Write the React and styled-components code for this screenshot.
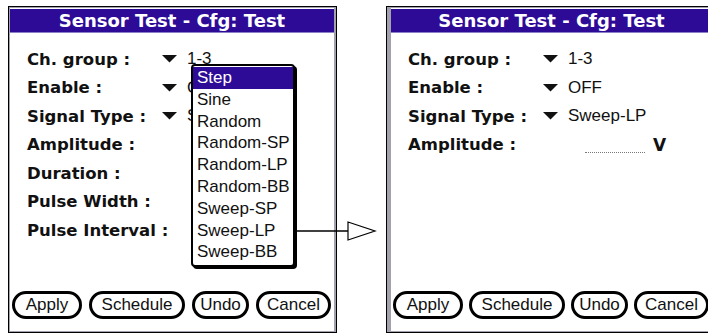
import React from 'react';
import styled, { createGlobalStyle } from 'styled-components';

const PURPLE = '#2e0b96';

const GlobalStyle = createGlobalStyle`
  html, body {
    margin: 0;
    padding: 0;
    background: #fff;
    overflow: hidden;
  }
`;

const Stage = styled.div`
  position: relative;
  width: 708px;
  height: 335px;
  box-sizing: border-box;
  padding: 6px 0 0 8px;
  display: flex;
  align-items: flex-start;
  overflow: hidden;
`;

const Screen = styled.div`
  position: relative;
  flex-shrink: 0;
  width: 329px;
  height: 327px;
  box-sizing: border-box;
  border: 1px solid #000;
  background: #a2a2ae;
  padding: 1px 2px 1px ${props => props.$gutter}px;
  display: flex;
`;

const Gutter = styled.div`
  flex-shrink: 0;
  width: 49px;
`;

const Display = styled.div`
  flex: 1;
  background: #fff;
  display: flex;
  flex-direction: column;
  border-top: 1px solid #fff;
`;

const TitleBar = styled.div`
  height: 24px;
  box-sizing: border-box;
  background: ${PURPLE};
  border-bottom: 1px solid #8a80c6;
  color: #fff;
  font-family: "DejaVu Sans", sans-serif;
  font-weight: bold;
  font-size: 18px;
  line-height: 23px;
  text-align: center;
  white-space: nowrap;
`;

const Form = styled.div`
  padding: 12px 0 0 17px;
  display: flex;
  flex-direction: column;
`;

const Row = styled.div`
  height: 28.5px;
  display: flex;
  align-items: center;
`;

const Label = styled.div`
  width: 135px;
  flex-shrink: 0;
  font-family: "DejaVu Sans", sans-serif;
  font-weight: bold;
  font-size: 16.5px;
  color: #111;
  white-space: nowrap;
`;

const Trigger = styled.div`
  display: flex;
  align-items: center;
  gap: 10px;
`;

const Value = styled.span`
  font-family: "Liberation Sans", sans-serif;
  font-size: 17px;
  color: #111;
  white-space: nowrap;
`;

const Field = styled.div`
  display: flex;
  align-items: center;
  padding-left: 42px;
  gap: 8px;
`;

const Dotted = styled.div`
  width: 60px;
  height: 16px;
  border-bottom: 1px dotted #777;
`;

const Unit = styled.span`
  font-family: "DejaVu Sans", sans-serif;
  font-weight: bold;
  font-size: 17px;
  color: #111;
`;

const ButtonBar = styled.div`
  margin-top: auto;
  padding: 0 3px 12px 2px;
  display: flex;
  justify-content: space-between;
`;

const Button = styled.div`
  width: ${props => props.$w}px;
  height: 28px;
  box-sizing: border-box;
  border: 3px solid #000;
  border-radius: 14px;
  background: #fff;
  display: flex;
  align-items: center;
  justify-content: center;
  font-family: "Liberation Sans", sans-serif;
  font-size: 17px;
  color: #111;
`;

const Popup = styled.div`
  position: absolute;
  left: 182px;
  top: 57px;
  width: 104px;
  box-sizing: border-box;
  border: 2px solid #000;
  border-radius: 4px;
  box-shadow: 2px 2px 0 #000;
  background: #fff;
  padding: 1px 0 2px;
  z-index: 2;
`;

const Item = styled.div`
  height: 21.8px;
  line-height: 21.8px;
  padding-left: 4px;
  font-family: "Liberation Sans", sans-serif;
  font-size: 17px;
  color: ${props => (props.$selected ? '#fff' : '#111')};
  background: ${props => (props.$selected ? PURPLE : 'transparent')};
  white-space: nowrap;
`;

const Connector = styled.svg`
  position: absolute;
  left: 296px;
  top: 218px;
  z-index: 3;
`;

const Arrow = () => (
  <svg width="15" height="8" viewBox="0 0 15 8">
    <polygon points="0,0 15,0 7.5,7.5" fill="#111" />
  </svg>
);

const signalTypes = [
  'Step', 'Sine', 'Random', 'Random-SP', 'Random-LP',
  'Random-BB', 'Sweep-SP', 'Sweep-LP', 'Sweep-BB',
];

const buttons = [
  { label: 'Apply', w: 70 },
  { label: 'Schedule', w: 96 },
  { label: 'Undo', w: 57 },
  { label: 'Cancel', w: 75 },
];

const Buttons = () => (
  <ButtonBar>
    {buttons.map(b => (
      <Button key={b.label} $w={b.w}>{b.label}</Button>
    ))}
  </ButtonBar>
);

const PickerRow = ({ label, value }) => (
  <Row>
    <Label>{label}</Label>
    <Trigger>
      <Arrow />
      <Value>{value}</Value>
    </Trigger>
  </Row>
);

const App = () => (
  <>
    <GlobalStyle />
    <Stage>
      <Screen $gutter={1}>
        <Display>
          <TitleBar>Sensor Test - Cfg: Test</TitleBar>
          <Form>
            <PickerRow label="Ch. group :" value="1-3" />
            <PickerRow label="Enable :" value="OFF" />
            <PickerRow label="Signal Type :" value="Step" />
            <Row><Label>Amplitude :</Label></Row>
            <Row><Label>Duration :</Label></Row>
            <Row><Label>Pulse Width :</Label></Row>
            <Row><Label>Pulse Interval :</Label></Row>
          </Form>
          <Buttons />
        </Display>
        <Popup>
          {signalTypes.map((t, i) => (
            <Item key={t} $selected={i === 0}>{t}</Item>
          ))}
        </Popup>
      </Screen>

      <Gutter />

      <Screen $gutter={4}>
        <Display>
          <TitleBar>Sensor Test - Cfg: Test</TitleBar>
          <Form>
            <PickerRow label="Ch. group :" value="1-3" />
            <PickerRow label="Enable :" value="OFF" />
            <PickerRow label="Signal Type :" value="Sweep-LP" />
            <Row>
              <Label>Amplitude :</Label>
              <Field>
                <Dotted />
                <Unit>V</Unit>
              </Field>
            </Row>
          </Form>
          <Buttons />
        </Display>
      </Screen>

      <Connector width="82" height="26" viewBox="0 0 82 26">
        <line x1="1" y1="13" x2="52" y2="13" stroke="#000" strokeWidth="1.4" />
        <polygon points="52,4 79,13 52,22" fill="#fff" stroke="#000" strokeWidth="1.2" />
      </Connector>
    </Stage>
  </>
);

export default App;
